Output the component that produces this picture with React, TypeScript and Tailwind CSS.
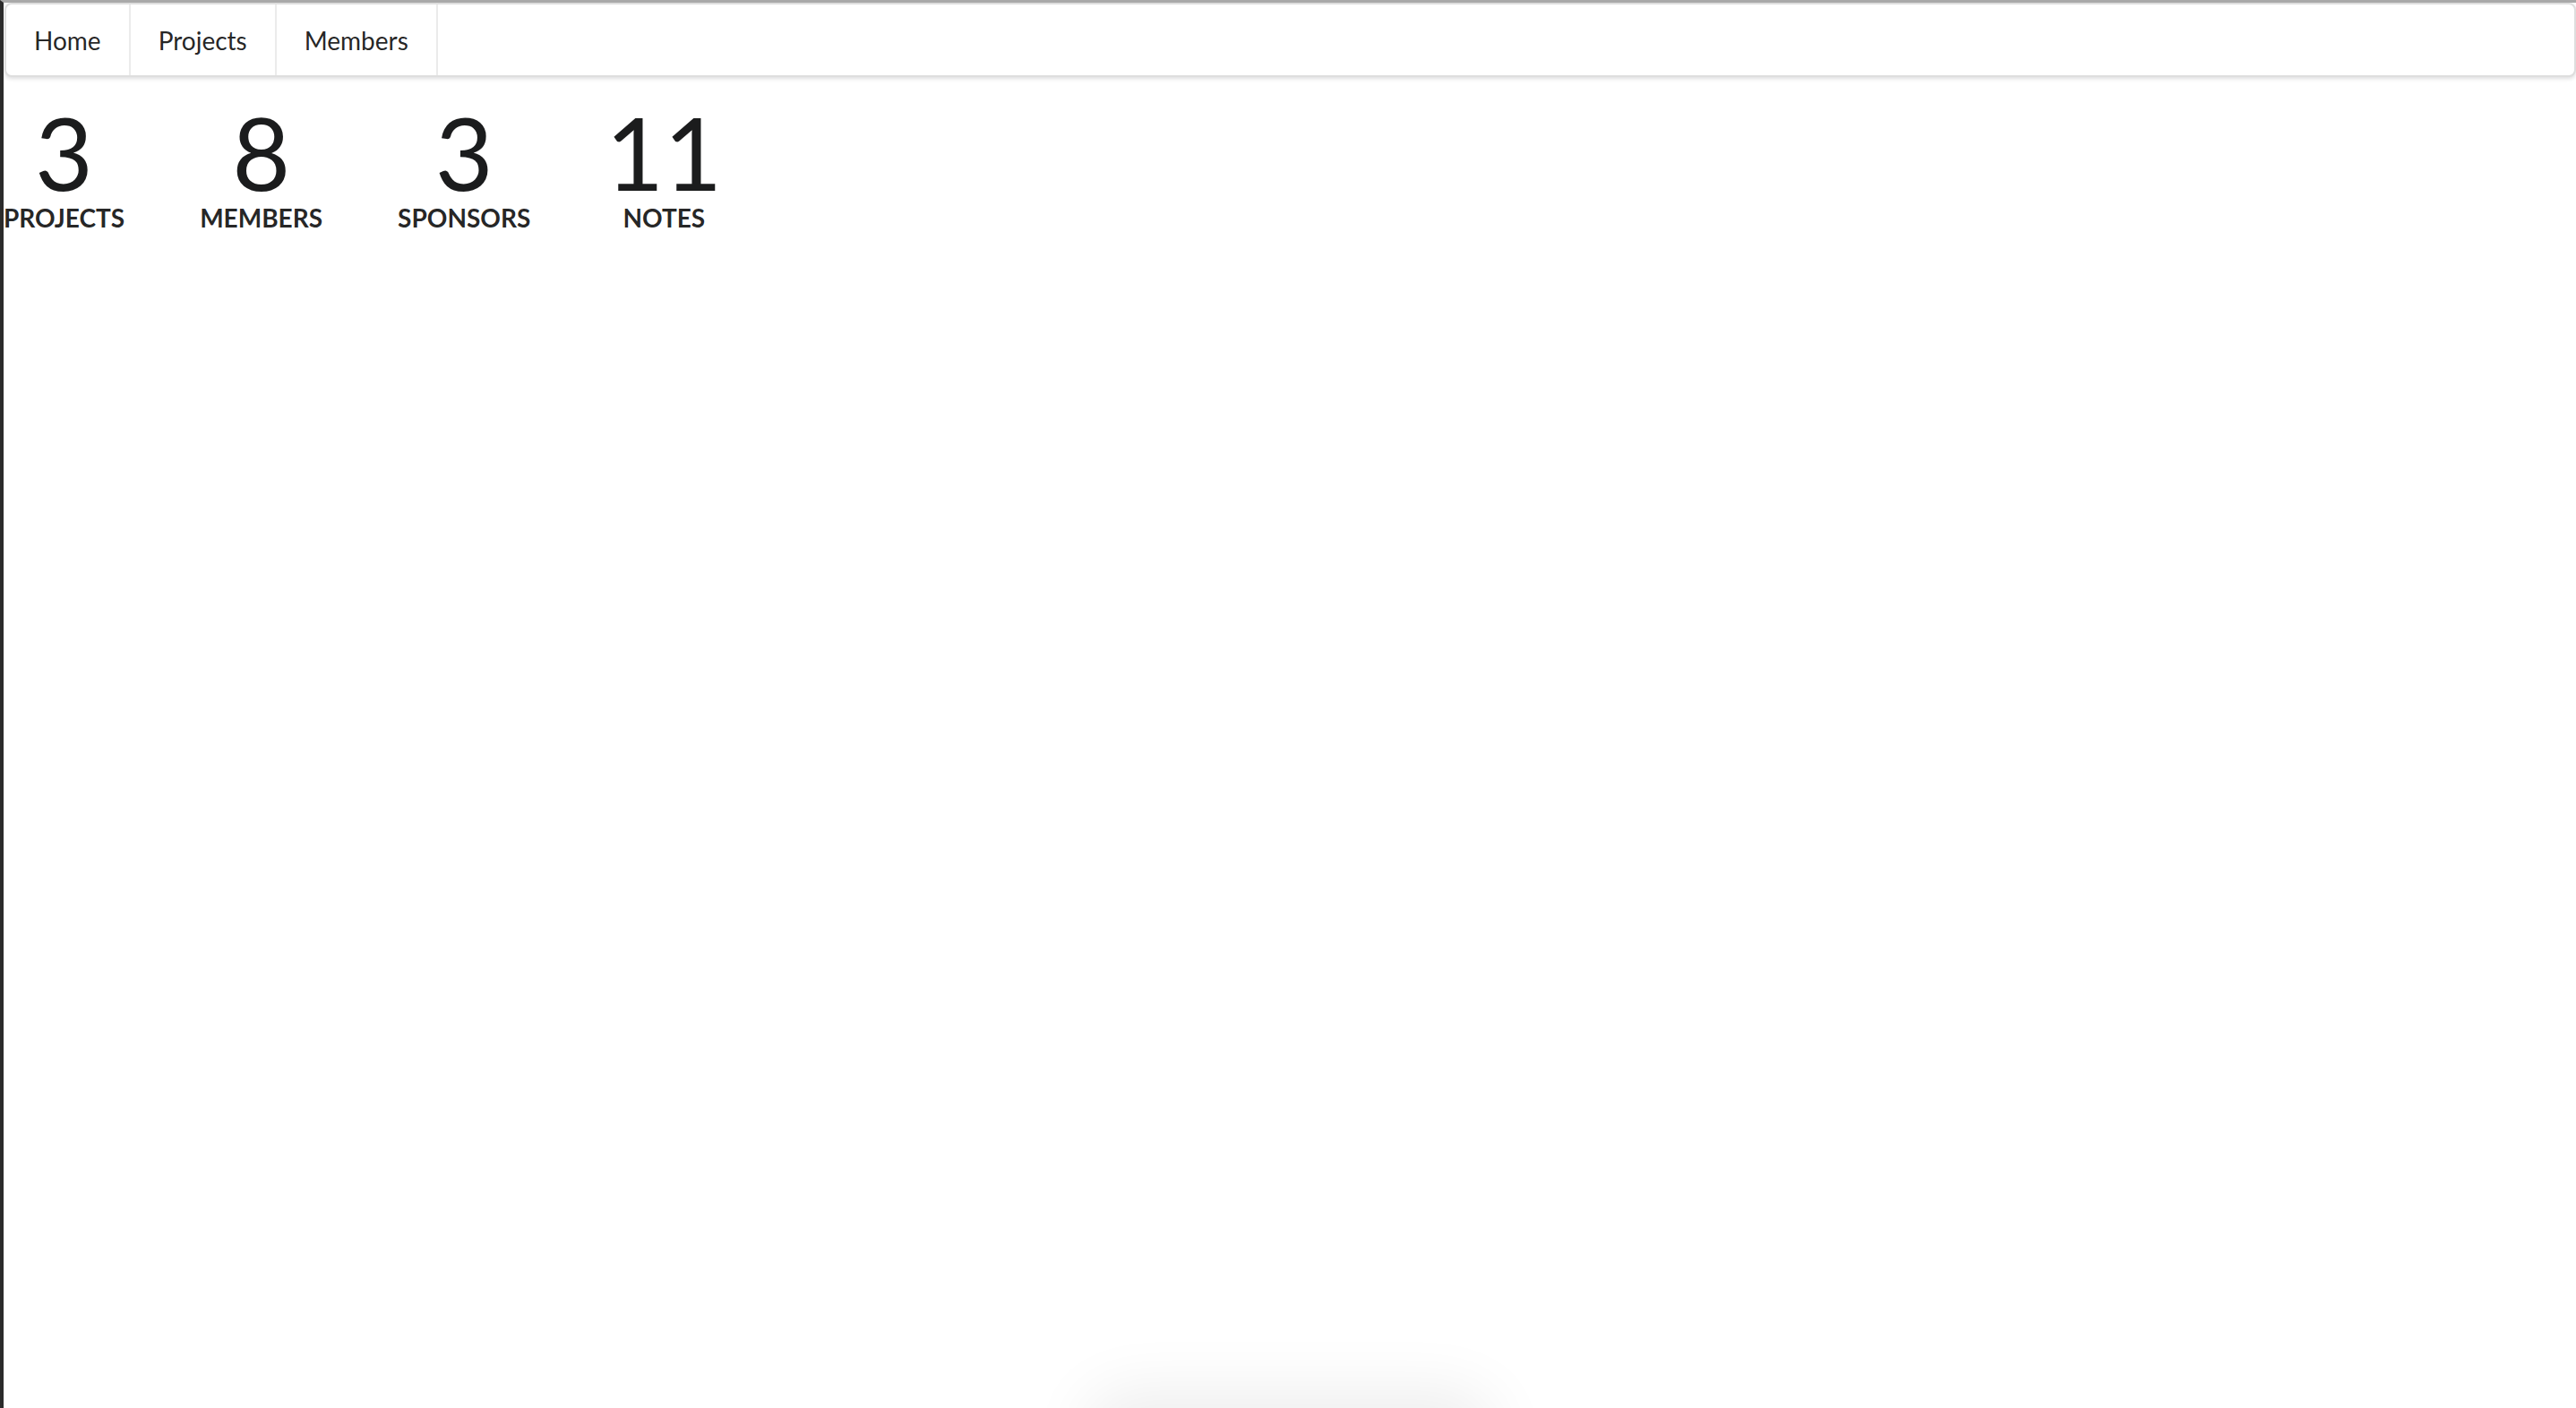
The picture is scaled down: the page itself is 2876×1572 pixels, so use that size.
const stats = [
  { value: "3", label: "Projects" },
  { value: "8", label: "Members" },
  { value: "3", label: "Sponsors" },
  { value: "11", label: "Notes" },
]

const links = ["Home", "Projects", "Members"]

const Menu = () => {
  return <div className="flex h-[83px] ml-[1px] rounded-[8px] border-2 border-[#dedede] bg-white shadow-[0_2px_4px_0_rgba(34,36,38,0.15)]">
    {links.map((link) => (
      <div key={link} className="flex items-center border-r-2 border-[#ebebeb] px-[31px] text-[28px] leading-none text-[rgba(0,0,0,0.87)]">
        {link}
      </div>
    ))}
  </div>
}

const Statistic = ({value, label}: {value: string, label: string}) => {
  return <div className="flex flex-col items-center mx-[42px]">
    <div className="text-[112px] leading-[0.95] text-[#1b1c1d]">{value}</div>
    <div className="mt-[6px] text-[28px] leading-none font-bold uppercase text-[rgba(0,0,0,0.87)]">{label}</div>
  </div>
}

export default function App() {
  return <div className="relative h-[1572px] overflow-hidden bg-white border-l-4 border-[#2b2b2b] border-t-[3px] border-t-[#a9a9a9] font-['Lato',sans-serif]">
    <Menu/>
    <div className="flex mt-[31px] -ml-[42px]">
      {stats.map((s) => (
        <Statistic key={s.label} value={s.value} label={s.label}/>
      ))}
    </div>
    <div className="absolute left-1/2 -bottom-[60px] h-[60px] w-[420px] -translate-x-1/2 rounded-full shadow-[0_0_70px_20px_rgba(0,0,0,0.07)]"></div>
  </div>
}
